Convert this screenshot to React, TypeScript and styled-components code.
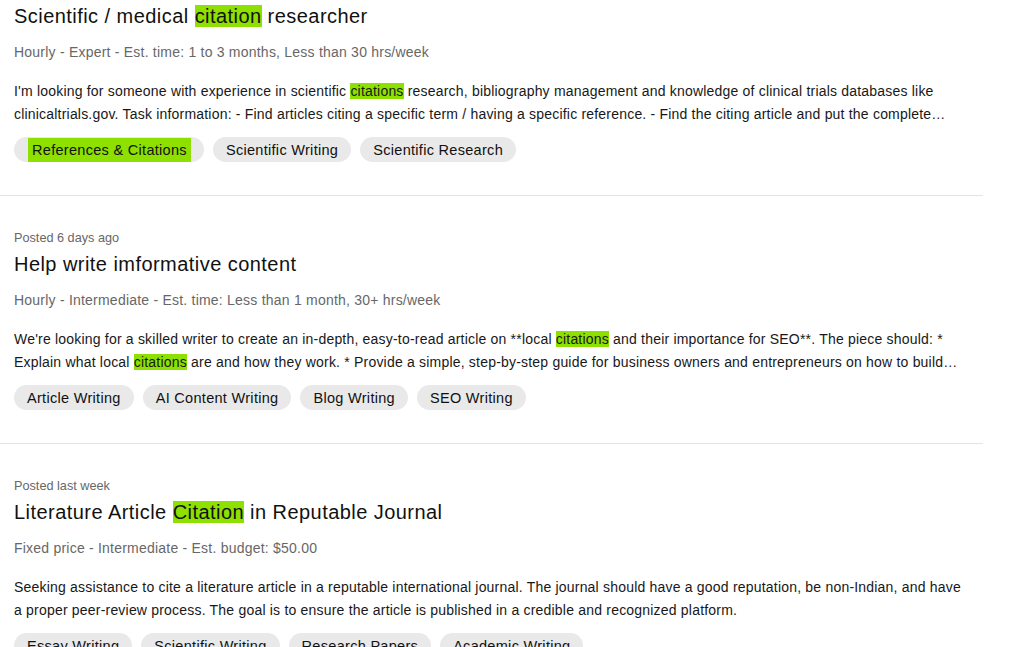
import React from "react";
import styled, { createGlobalStyle } from "styled-components";

const GlobalStyle = createGlobalStyle`
  html, body {
    margin: 0;
    padding: 0;
    background: #ffffff;
  }
  body {
    font-family: "Liberation Sans", Arial, sans-serif;
    color: #181818;
    -webkit-font-smoothing: antialiased;
  }
`;

type Part = string | { hl: string };

type Job = {
  posted?: string;
  title: Part[];
  meta: string;
  description: Part[];
  tags: Part[];
};

const jobs: Job[] = [
  {
    title: ["Scientific / medical ", { hl: "citation" }, " researcher"],
    meta: "Hourly - Expert - Est. time: 1 to 3 months, Less than 30 hrs/week",
    description: [
      "I'm looking for someone with experience in scientific ",
      { hl: "citations" },
      " research, bibliography management and knowledge of clinical trials databases like clinicaltrials.gov. Task information: - Find articles citing a specific term / having a specific reference. - Find the citing article and put the complete reference in a spreadsheet with the relevant information about each one.",
    ],
    tags: [{ hl: "References & Citations" }, "Scientific Writing", "Scientific Research"],
  },
  {
    posted: "Posted 6 days ago",
    title: ["Help write imformative content"],
    meta: "Hourly - Intermediate - Est. time: Less than 1 month, 30+ hrs/week",
    description: [
      "We're looking for a skilled writer to create an in-depth, easy-to-read article on **local ",
      { hl: "citations" },
      " and their importance for SEO**. The piece should: * Explain what local ",
      { hl: "citations" },
      " are and how they work. * Provide a simple, step-by-step guide for business owners and entrepreneurs on how to build and manage their citations across directories.",
    ],
    tags: ["Article Writing", "AI Content Writing", "Blog Writing", "SEO Writing"],
  },
  {
    posted: "Posted last week",
    title: ["Literature Article ", { hl: "Citation" }, " in Reputable Journal"],
    meta: "Fixed price - Intermediate - Est. budget: $50.00",
    description: [
      "Seeking assistance to cite a literature article in a reputable international journal. The journal should have a good reputation, be non-Indian, and have a proper peer-review process. The goal is to ensure the article is published in a credible and recognized platform.",
    ],
    tags: ["Essay Writing", "Scientific Writing", "Research Papers", "Academic Writing"],
  },
];

const renderParts = (parts: Part[]) =>
  parts.map((p, i) =>
    typeof p === "string" ? <React.Fragment key={i}>{p}</React.Fragment> : <Mark key={i}>{p.hl}</Mark>
  );

export default function App() {
  return (
    <>
      <GlobalStyle />
      <List>
        {jobs.map((job, i) => (
          <Card key={i} $first={i === 0}>
            {job.posted && <Posted>{job.posted}</Posted>}
            <Title>{renderParts(job.title)}</Title>
            <Meta>{job.meta}</Meta>
            <Description>{renderParts(job.description)}</Description>
            <Tags>
              {job.tags.map((t, j) =>
                typeof t === "string" ? (
                  <Tag key={j}>{t}</Tag>
                ) : (
                  <Tag key={j}>
                    <TagMark>{t.hl}</TagMark>
                  </Tag>
                )
              )}
            </Tags>
          </Card>
        ))}
      </List>
    </>
  );
}

const List = styled.div`
  width: 983px;
  display: flex;
  flex-direction: column;
`;

const Card = styled.section<{ $first?: boolean }>`
  padding: ${(p) => (p.$first ? "2px" : "33px")} 20px 33px 14px;
  border-bottom: 1px solid #e4e4e4;
`;

const Posted = styled.div`
  font-size: 12.7px;
  line-height: 18px;
  color: #676767;
  margin-bottom: 3px;
`;

const Title = styled.h2`
  margin: 0;
  font-size: 20px;
  line-height: 28px;
  font-weight: 400;
  letter-spacing: 0.45px;
  color: #111111;
`;

const Mark = styled.span`
  background: #8ee000;
`;

const Meta = styled.div`
  margin-top: 12px;
  font-size: 14px;
  line-height: 20px;
  letter-spacing: 0.22px;
  color: #676767;
`;

const Description = styled.p`
  margin: 18px 0 0;
  font-size: 14px;
  line-height: 23px;
  letter-spacing: 0.2px;
  color: #181818;
  display: -webkit-box;
  -webkit-line-clamp: 2;
  -webkit-box-orient: vertical;
  overflow: hidden;
`;

const Tags = styled.div`
  display: flex;
  gap: 9px;
  margin-top: 11px;
`;

const Tag = styled.span`
  display: inline-flex;
  align-items: center;
  height: 25px;
  padding: 0 13px;
  border-radius: 13px;
  background: #e9e9e9;
  font-size: 14.5px;
  letter-spacing: 0.3px;
  color: #111111;
`;

const TagMark = styled.span`
  display: inline-flex;
  align-items: center;
  height: 24px;
  background: #8ee000;
  padding: 0 4px;
  margin-left: 1px;
`;
